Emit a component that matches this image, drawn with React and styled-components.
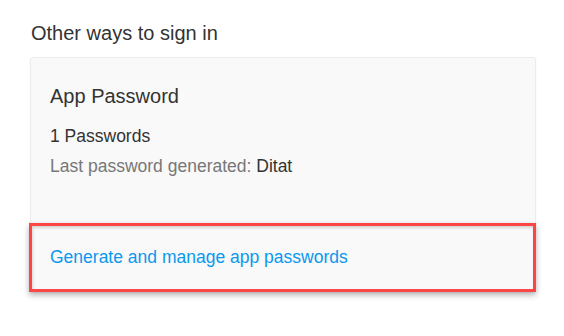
import styled, { createGlobalStyle } from "styled-components";

const GlobalStyle = createGlobalStyle`
  body {
    margin: 0;
    background: #fff;
    font-family: "Liberation Sans", Arial, sans-serif;
  }
`;

const Page = styled.div`
  width: 564px;
  height: 336px;
  padding: 21px 29px 0 31px;
  box-sizing: border-box;
  display: flex;
  flex-direction: column;
`;

const Title = styled.h2`
  margin: 0 0 12px;
  font-size: 20px;
  line-height: 24px;
  font-weight: 400;
  color: #333;
`;

const Card = styled.div`
  margin-left: -1px;
  width: 506px;
  box-sizing: border-box;
  background: #f9f9f9;
  border: 1px solid #ececec;
  border-radius: 3px;
  box-shadow: 0 1px 2px rgba(0, 0, 0, 0.05);
  display: flex;
  flex-direction: column;
`;

const Body = styled.div`
  padding: 26px 20px 42px 19px;
  display: flex;
  flex-direction: column;
`;

const CardTitle = styled.h3`
  margin: 0 0 13px;
  font-size: 20px;
  line-height: 24px;
  font-weight: 400;
  color: #333;
`;

const Line = styled.p`
  margin: 0;
  font-size: 17.5px;
  line-height: 30px;
  color: ${(p) => (p.$muted ? "#777" : "#333")};
`;

const Value = styled.span`
  color: #333;
`;

const Footer = styled.div`
  margin: 0 -1px -1px -2px;
  padding: 16px 17px 17px 18px;
  border: 3px solid #fa4646;
  background: #f9f9f9;
  box-shadow: 0 3px 6px rgba(0, 0, 0, 0.3), inset 1px 2px 3px rgba(0, 0, 0, 0.15);
`;

const Link = styled.a`
  font-size: 17.5px;
  line-height: 30px;
  color: #0a98ee;
  text-decoration: none;
  cursor: pointer;
`;

export default function App() {
  return (
    <>
      <GlobalStyle />
      <Page>
        <Title>Other ways to sign in</Title>
        <Card>
          <Body>
            <CardTitle>App Password</CardTitle>
            <Line>1 Passwords</Line>
            <Line $muted>
              Last password generated: <Value>Ditat</Value>
            </Line>
          </Body>
          <Footer>
            <Link>Generate and manage app passwords</Link>
          </Footer>
        </Card>
      </Page>
    </>
  );
}
